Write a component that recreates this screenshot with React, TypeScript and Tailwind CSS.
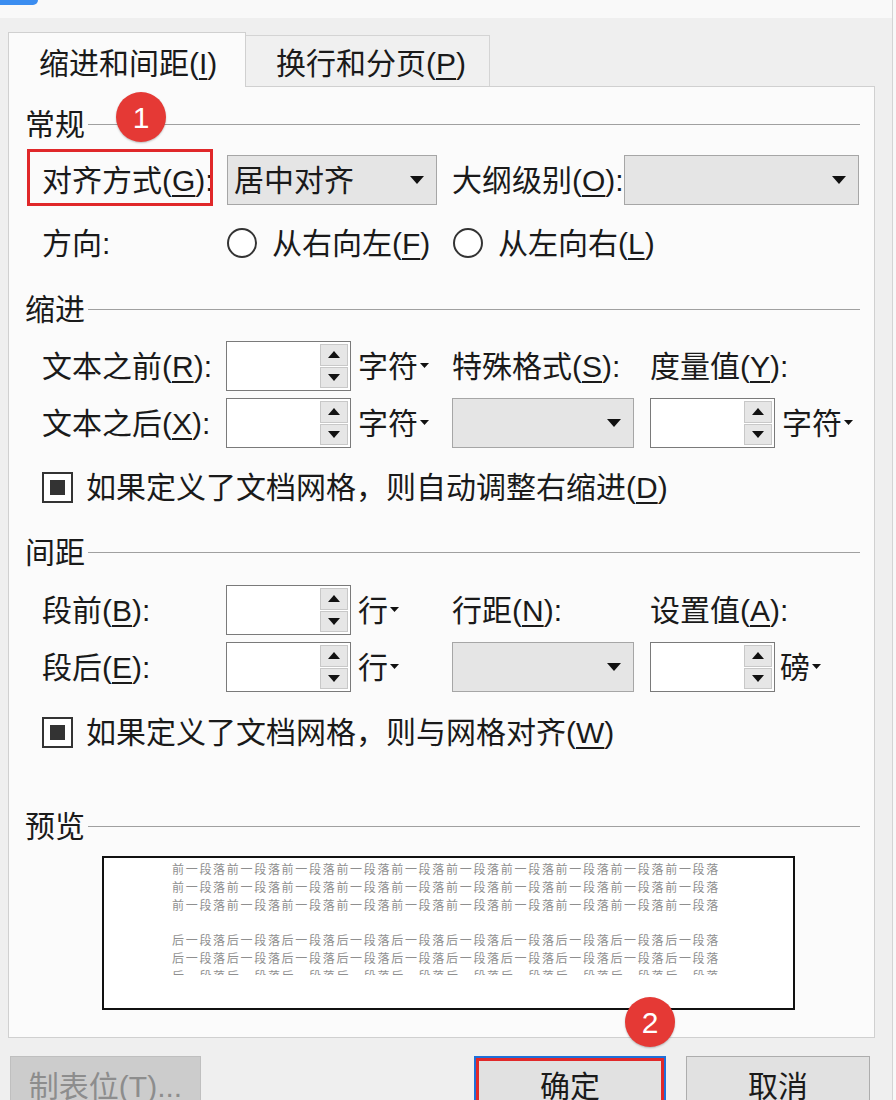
import type { ReactNode } from 'react'

function U({ children }: { children: ReactNode }) {
  return <span className="underline decoration-[1.5px] underline-offset-[4px]">{children}</span>
}

function Down({ w = 14, h = 8 }: { w?: number; h?: number }) {
  return (
    <svg width={w} height={h} viewBox={`0 0 ${w} ${h}`}>
      <path d={`M0 0H${w}L${w / 2} ${h}Z`} fill="#111" />
    </svg>
  )
}

function Up({ w = 12, h = 7 }: { w?: number; h?: number }) {
  return (
    <svg width={w} height={h} viewBox={`0 0 ${w} ${h}`}>
      <path d={`M0 ${h}H${w}L${w / 2} 0Z`} fill="#111" />
    </svg>
  )
}

function Select({ className = '', value }: { className?: string; value?: string }) {
  return (
    <div className={`flex items-center h-[50px] bg-[#e5e5e5] border border-[#a6a6a6] pl-[6px] pr-[12px] ${className}`}>
      <span className="flex-1">{value}</span>
      <Down />
    </div>
  )
}

function Spin({ className = '' }: { className?: string }) {
  return (
    <div className={`flex justify-end w-[125px] h-[50px] bg-white border border-[#7a7a7a] p-[2px] ${className}`}>
      <div className="flex flex-col w-[28px] gap-px">
        <div className="flex-1 flex items-center justify-center bg-[#e6e6e6] border border-[#c8c8c8]">
          <Up />
        </div>
        <div className="flex-1 flex items-center justify-center bg-[#e6e6e6] border border-[#c8c8c8]">
          <Down w={12} h={7} />
        </div>
      </div>
    </div>
  )
}

function Unit({ text, className = '' }: { text: string; className?: string }) {
  return (
    <div className={`flex items-center ${className}`}>
      <span>{text}</span>
      <span className="ml-[2px] mb-[2px] flex">
        <Down w={9} h={5} />
      </span>
    </div>
  )
}

function Radio() {
  return <div className="w-[30px] h-[30px] rounded-full border-2 border-[#333] bg-white shrink-0" />
}

function Check() {
  return (
    <div className="w-[31px] h-[31px] border-2 border-[#333] bg-white flex items-center justify-center shrink-0">
      <div className="w-[15px] h-[15px] bg-[#333]" />
    </div>
  )
}

function Section({ title, className = '' }: { title: string; className?: string }) {
  return (
    <div className={`flex items-center h-[36px] pl-[16px] pr-[14px] shrink-0 ${className}`}>
      <span>{title}</span>
      <div className="flex-1 h-px bg-[#a0a0a0] ml-[3px]" />
    </div>
  )
}

function PreviewRows({ word }: { word: string }) {
  const line = word.repeat(10)
  return (
    <div className="flex flex-col">
      <div className="h-[18px] leading-[18px] whitespace-nowrap">{line}</div>
      <div className="h-[18px] leading-[18px] whitespace-nowrap">{line}</div>
      <div className="h-[18px] leading-[18px] whitespace-nowrap">{line}</div>
    </div>
  )
}

export default function App() {
  return (
    <div className="relative flex w-[896px] h-[1100px] overflow-hidden bg-[#efefef] text-[30px] text-[#1a1a1a] font-['Liberation_Sans','Noto_Sans_CJK_SC',sans-serif]">
      <div className="flex flex-col w-[892px] shrink-0">
        {/* title bar remnant */}
        <div className="h-[18px] shrink-0 bg-[#f9f9f9]">
          <div className="w-[38px] h-[5px] bg-[#3b8df0] rounded-br-[5px]" />
        </div>

        {/* tabs */}
        <div className="flex items-end h-[68px] shrink-0 pl-[8px] pt-[14px]">
          <div className="relative z-10 flex items-center w-[238px] h-[55px] -mb-px pl-[30px] pt-[6px] bg-[#fbfbfb] border border-b-0 border-[#d0d0d0]">
            缩进和间距(<U>I</U>)
          </div>
          <div className="flex items-center w-[244px] h-[51px] pl-[30px] pt-[4px] bg-[#f0f0f0] border border-l-0 border-b-0 border-[#d4d4d4]">
            换行和分页(<U>P</U>)
          </div>
        </div>

        {/* panel */}
        <div className="flex flex-col shrink-0 ml-[8px] w-[867px] h-[952px] bg-[#fbfbfb] border border-[#d0d0d0] pt-[19px]">
          <Section title="常规" />

          <div className="relative flex items-center h-[50px] mt-[13px] pl-[33px] shrink-0">
            <div className="absolute left-[18px] top-[-6px] w-[186px] h-[57px] border-[3px] border-[#e0282a]" />
            <div className="w-[185px] whitespace-nowrap">
              对齐方式(<U>G</U>):
            </div>
            <Select className="w-[210px]" value="居中对齐" />
            <div className="w-[15px]" />
            <div className="w-[172px] whitespace-nowrap">
              大纲级别(<U>O</U>):
            </div>
            <Select className="w-[235px]" />
          </div>

          <div className="flex items-center h-[40px] mt-[18px] pl-[33px] shrink-0">
            <div className="w-[185px]">方向:</div>
            <div className="flex items-center w-[226px]">
              <Radio />
              <span className="ml-[15px] whitespace-nowrap">
                从右向左(<U>F</U>)
              </span>
            </div>
            <div className="flex items-center">
              <Radio />
              <span className="ml-[15px] whitespace-nowrap">
                从左向右(<U>L</U>)
              </span>
            </div>
          </div>

          <Section title="缩进" className="mt-[28px]" />

          <div className="flex items-center h-[50px] mt-[14px] pl-[33px] shrink-0">
            <div className="w-[184px] whitespace-nowrap">
              文本之前(<U>R</U>):
            </div>
            <Spin />
            <Unit text="字符" className="ml-[7px] w-[94px]" />
            <div className="w-[198px] whitespace-nowrap">
              特殊格式(<U>S</U>):
            </div>
            <div className="whitespace-nowrap">
              度量值(<U>Y</U>):
            </div>
          </div>

          <div className="flex items-center h-[50px] mt-[7px] pl-[33px] shrink-0">
            <div className="w-[184px] whitespace-nowrap">
              文本之后(<U>X</U>):
            </div>
            <Spin />
            <Unit text="字符" className="ml-[7px] w-[94px]" />
            <Select className="w-[182px]" />
            <Spin className="ml-[16px]" />
            <Unit text="字符" className="ml-[7px]" />
          </div>

          <div className="flex items-center h-[40px] mt-[19px] pl-[33px] shrink-0">
            <Check />
            <span className="ml-[13px] whitespace-nowrap">
              如果定义了文档网格，则自动调整右缩进(<U>D</U>)
            </span>
          </div>

          <Section title="间距" className="mt-[27px]" />

          <div className="flex items-center h-[50px] mt-[15px] pl-[33px] shrink-0">
            <div className="w-[184px] whitespace-nowrap">
              段前(<U>B</U>):
            </div>
            <Spin />
            <Unit text="行" className="ml-[7px] w-[94px]" />
            <div className="w-[198px] whitespace-nowrap">
              行距(<U>N</U>):
            </div>
            <div className="whitespace-nowrap">
              设置值(<U>A</U>):
            </div>
          </div>

          <div className="flex items-center h-[50px] mt-[7px] pl-[33px] shrink-0">
            <div className="w-[184px] whitespace-nowrap">
              段后(<U>E</U>):
            </div>
            <Spin />
            <Unit text="行" className="ml-[7px] w-[94px]" />
            <Select className="w-[182px]" />
            <Spin className="ml-[16px]" />
            <Unit text="磅" className="ml-[5px]" />
          </div>

          <div className="flex items-center h-[40px] mt-[20px] pl-[33px] shrink-0">
            <Check />
            <span className="ml-[13px] whitespace-nowrap">
              如果定义了文档网格，则与网格对齐(<U>W</U>)
            </span>
          </div>

          <Section title="预览" className="mt-[56px]" />

          <div className="shrink-0 ml-[93px] mt-[12px] w-[693px] h-[154px] bg-white border-2 border-[#111] pl-[68px] pt-[2px] text-[12px] tracking-[1.7px] text-[#8f8f8f] font-['Noto_Sans_CJK_SC',sans-serif]">
            <PreviewRows word="前一段落" />
            <div className="mt-[17px] h-[44px] overflow-hidden">
              <PreviewRows word="后一段落" />
            </div>
          </div>
        </div>

        {/* buttons */}
        <div className="flex shrink-0 mt-[18px]">
          <div className="flex items-center justify-center ml-[10px] w-[191px] h-[60px] bg-[#cccccc] border border-[#bfbfbf] text-[#8d8d8d]">
            制表位(T)...
          </div>
          <div className="ml-[273px] w-[192px] h-[60px] border-2 border-[#1e6fd9]">
            <div className="flex items-center justify-center w-full h-full bg-[#e1e1e1] border-[3px] border-[#e0282a]">
              确定
            </div>
          </div>
          <div className="flex items-center justify-center ml-[20px] w-[184px] h-[60px] bg-[#e1e1e1] border border-[#adadad]">
            取消
          </div>
        </div>
      </div>

      <div className="w-[4px] shrink-0 bg-[#f8f8f8] border-l border-[#d4d4d4]" />

      {/* annotation badges */}
      <div className="absolute left-[116px] top-[92px] w-[50px] h-[50px] rounded-full bg-[#e53935] text-white flex items-center justify-center text-[30px] shadow-[0_1px_2px_rgba(0,0,0,0.25)]">
        1
      </div>
      <div className="absolute left-[625px] top-[997px] w-[50px] h-[50px] rounded-full bg-[#e53935] text-white flex items-center justify-center text-[30px] shadow-[0_1px_2px_rgba(0,0,0,0.25)]">
        2
      </div>
    </div>
  )
}
